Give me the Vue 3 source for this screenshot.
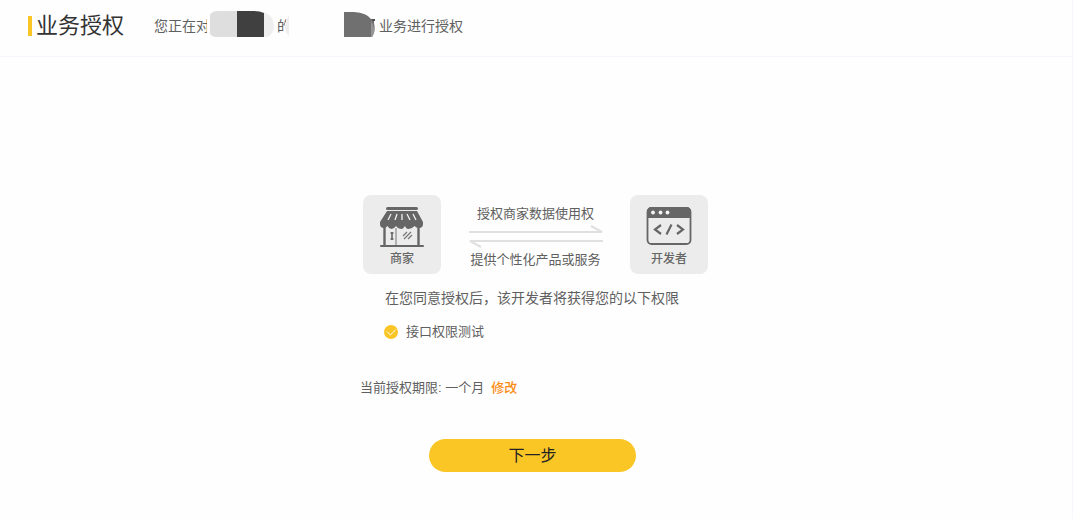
<script setup>
import { ref } from 'vue'

const permissions = ref(['接口权限测试'])
const period = ref('一个月')
</script>

<template>
  <div class="page">
    <header class="header">
      <h1 class="title">业务授权</h1>
      <p class="subtitle">
        <span>您正在对</span>
        <svg class="mask mask-name" width="70" height="28" viewBox="0 0 70 28" aria-hidden="true">
          <path d="M0 8 L3 8 V28 H0Z" fill="#fefefe" />
          <path d="M3 5 Q5 1 11 1 H30 V27 H8 Q5 27 3 24Z" fill="#dedede" />
          <path d="M56 2 Q67 5 67 16 Q67 23 61 27 H56Z" fill="#eeeeee" />
          <path d="M30 1 H46 Q53 1 57 3 V27 H30Z" fill="#404040" />
        </svg>
        <span>的</span>
        <svg class="mask mask-edge" width="8" height="28" viewBox="0 0 8 28" aria-hidden="true">
          <path d="M1 20 L4 8 H8 V28 H1Z" fill="#fefefe" />
          <path d="M6 5 Q2 11 2 17 Q2 22 6 26Z" fill="#eeeeee" />
        </svg>
        <svg class="mask mask-service" width="32" height="28" viewBox="0 0 32 28" aria-hidden="true">
          <path d="M0 2 L10 2 Q23 3 27 9 H30 V13 Q32 21 28 27 H0Z" fill="#707070" />
          <path d="M28 9 H31 V11 H28Z" fill="#505050" />
          <path d="M27 11 Q33 19 28 27 H27Z" fill="#959595" />
        </svg>
        <span>业务进行授权</span>
      </p>
    </header>

    <main class="content">
      <section class="parties">
        <div class="card">
          <svg width="46" height="42" viewBox="0 0 46 42" aria-hidden="true">
            <rect x="7" y="0" width="32" height="3" rx="1.500" fill="#666" />
            <path d="M8 4 H38 L44 15 V17 Q44 21 40 21 Q37 21 35.500 19 Q33 22 29.500 22 Q27 22 26 19 Q24 22 23 22 Q19 22 17 19 Q15 22 12.500 22 Q10 22 8.500 19 Q7 21 5 21 Q1 21 1 17 V15Z" fill="#666" />
            <path d="M12 7 L9 13 M18 7 L16 13 M23 7 V13 M28 7 L31 13 M34 7 L37 13" stroke="#f0f0f0" stroke-width="1.300" fill="none" />
            <path d="M5.500 20 V39 M39.500 20 V39" stroke="#666" stroke-width="2.400" />
            <path d="M17 21 V39" stroke="#777" stroke-width="1" />
            <path d="M13 25 V33 M11.500 26 H14.500 M11.500 32 H14.500" stroke="#666" stroke-width="1.600" />
            <path d="M24 29 L28 25 M25 32 L32 25 M29 32 L33 28" stroke="#777" stroke-width="1.200" />
            <rect x="1" y="38" width="44" height="2" rx="1" fill="#666" />
          </svg>
          <span class="card-name">商家</span>
        </div>

        <div class="exchange">
          <span>授权商家数据使用权</span>
          <svg class="arrows" width="136" height="24" viewBox="0 0 136 24" aria-hidden="true">
            <path d="M1 8 H134 L123 2 M135 17 H2 L13 23" fill="none" stroke="#e0e0e0" stroke-width="2" />
          </svg>
          <span>提供个性化产品或服务</span>
        </div>

        <div class="card">
          <svg width="46" height="42" viewBox="0 0 46 42" aria-hidden="true">
            <rect x="1.500" y="1" width="43" height="36" rx="4" fill="none" stroke="#666" stroke-width="1.800" />
            <path d="M1 11 V5 Q1 0 6 0 H40 Q45 0 45 5 V11Z" fill="#666" />
            <g fill="#f4f4f4">
              <circle cx="7" cy="5.500" r="1.900" />
              <circle cx="14.500" cy="5.500" r="1.900" />
              <circle cx="21.500" cy="5.500" r="1.900" />
            </g>
            <path d="M15 18 L9 22.500 L15 27 M31 18 L37 22.500 L31 27 M25.500 17.500 L20.500 27.500" fill="none" stroke="#666" stroke-width="2.200" />
          </svg>
          <span class="card-name">开发者</span>
        </div>
      </section>

      <h2 class="notice">在您同意授权后，该开发者将获得您的以下权限</h2>

      <ul class="permissions">
        <li v-for="item in permissions" :key="item">
          <svg width="14" height="14" viewBox="0 0 14 14" aria-hidden="true">
            <circle cx="7" cy="7" r="7" fill="#fac626" />
            <path d="M3 6.500 L6.300 10 L11.500 5" fill="none" stroke="#fff" stroke-width="1" />
          </svg>
          <span>{{ item }}</span>
        </li>
      </ul>

      <p class="period">
        <span>当前授权期限: {{ period }}</span>
        <a href="#" class="edit" @click.prevent>修改</a>
      </p>

      <button type="button" class="next">下一步</button>
    </main>
  </div>
</template>

<style>
body {
  background: #fefefe;
}
</style>

<style scoped>
.page {
  box-sizing: border-box;
  min-height: 100vh;
  border-right: 1px solid #f6f6fc;
  color: #606060;
  font-family: "Liberation Sans", "Noto Sans CJK SC", sans-serif;
  font-size: 13px;
  line-height: 20px;
}

.header {
  display: flex;
  align-items: center;
  box-sizing: border-box;
  height: 57px;
  padding: 0 28px 5px;
  border-bottom: 1px solid #f6f6fc;
}

.title {
  display: flex;
  align-items: center;
  gap: 4px;
  margin: 0;
  color: #333;
  font-size: 22px;
  font-weight: 400;
  line-height: 32px;
}

.title::before {
  width: 4px;
  height: 20px;
  background: #fac626;
  content: "";
}

.subtitle {
  display: flex;
  align-items: center;
  margin: 0 0 0 30px;
  font-size: 14px;
  white-space: nowrap;
}

.mask {
  flex: none;
}

.mask-name {
  margin: 0 0 4px -3px;
}

.mask-edge {
  margin: 0 53px 4px -8px;
}

.mask-service {
  margin: 0 3px 4px 0;
}

.content {
  display: flex;
  flex-direction: column;
  align-items: flex-start;
  width: 352px;
  margin: 0 auto;
  padding-top: 138px;
}

.parties {
  display: flex;
  align-items: center;
  justify-content: space-between;
  align-self: stretch;
  padding: 0 4px 0 3px;
}

.card {
  display: flex;
  flex-direction: column;
  align-items: center;
  box-sizing: border-box;
  width: 78px;
  height: 79px;
  padding-top: 12px;
  border-radius: 8px;
  background: #ececec;
}

.card-name {
  color: #666;
  font-size: 12px;
  font-weight: 500;
}

.exchange {
  display: flex;
  flex-direction: column;
  align-items: center;
  padding-top: 5px;
}

.arrows {
  margin: 0 0 2px;
}

.notice {
  align-self: center;
  margin: 12px 8px 0 0;
  font-size: 14px;
  font-weight: 400;
  line-height: 24px;
  white-space: nowrap;
}

.permissions {
  margin: 12px 0 0 24px;
  padding: 0;
  list-style: none;
}

.permissions li {
  display: flex;
  align-items: center;
  gap: 8px;
}

.period {
  display: flex;
  gap: 7px;
  margin: 36px 0 0;
}

.edit {
  color: #fa8c16;
  font-weight: 500;
  text-decoration: none;
}

.next {
  align-self: center;
  width: 207px;
  height: 33px;
  margin: 41px 7px 0 0;
  padding: 0;
  border: 0;
  border-radius: 17px;
  background: #fac626;
  color: #222;
  font-family: inherit;
  font-size: 16px;
  line-height: 33px;
  cursor: pointer;
}
</style>
